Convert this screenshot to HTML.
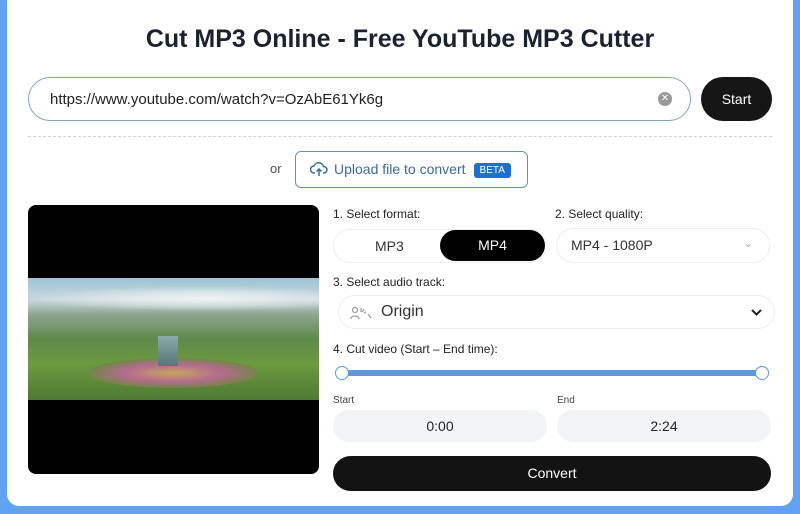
<!DOCTYPE html>
<html><head><style>
*{box-sizing:border-box;margin:0;padding:0}
body{width:800px;height:514px;background:#62a2f2;font-family:"Liberation Sans",sans-serif;position:relative;overflow:hidden}
.card{position:absolute;left:7px;top:-10px;width:786px;height:516px;background:#fff;border-radius:12px}
.a{position:absolute}
h1{position:absolute;left:0;width:800px;top:25px;text-align:center;font-size:25px;font-weight:bold;color:#1a2230;letter-spacing:0}
.input{left:28px;top:77px;width:663px;height:44px;border:1.5px solid #7ea3cc;border-radius:22px;font-size:15px;color:#222;padding:13px 0 0 21px}
.x{left:658px;top:92px;width:14px;height:14px;border-radius:50%;background:#999;color:#fff;font-size:10px;text-align:center;line-height:14px}
.start{left:701px;top:77px;width:71px;height:44px;border-radius:22px;background:#161616;color:#fff;font-size:14px;text-align:center;line-height:44px}
.dash{left:28px;top:136px;width:744px;border-top:1px dashed #d4d4d4}
.up{left:295px;top:151px;width:233px;height:37px;border:1.5px solid #6b8fb5;border-radius:6px;font-size:14px;color:#3c6a9a;padding:9px 0 0 38px}
.beta{display:inline-block;background:#1d6fd0;color:#fff;font-size:10px;padding:2px 6px;border-radius:3px;margin-left:8px;vertical-align:1px}
.lbl{font-size:12px;color:#222}
.pill{border:1px solid #eee;border-radius:20px;font-size:14px;color:#333}
.vid{left:28px;top:205px;width:291px;height:269px;background:#000;border-radius:8px;overflow:hidden}
.band{position:absolute;left:0;top:73px;width:291px;height:122px;background:linear-gradient(180deg,#9fc3d6 0%,#c7d8dd 18%,#8ea592 30%,#5d8a4a 50%,#6c9a40 70%,#4f7a33 100%)}
</style></head><body>
<div class="card"></div>
<h1>Cut MP3 Online - Free YouTube MP3 Cutter</h1>
<div class="a input">https://www.youtube.com/watch?v=OzAbE61Yk6g</div>
<div class="a x">✕</div>
<div class="a start">Start</div>
<div class="a dash"></div>
<div class="a" style="left:270px;top:161px;font-size:13px;color:#555">or</div>
<div class="a up"><svg class="a" style="left:14px;top:9px" width="18" height="16" viewBox="0 0 18 16" fill="none" stroke="#3c6a9a" stroke-width="1.5"><path d="M5 12H4a3.5 3.5 0 0 1 0-7 5 5 0 0 1 9.5 0.5A3 3 0 0 1 14 12h-1"/><path d="M9 15V8M6.5 10.5L9 8l2.5 2.5"/></svg>Upload file to convert<span class="beta">BETA</span></div>
<div class="a vid"><div class="band">
<div style="position:absolute;left:0;top:8px;width:291px;height:25px;background:radial-gradient(ellipse at 60% 50%,#eef2f2 0%,rgba(230,235,235,.6) 40%,transparent 70%)"></div>
<div style="position:absolute;left:60px;top:80px;width:170px;height:30px;border-radius:50%;background:radial-gradient(ellipse,#c9a35e 0%,#b46b8e 40%,#6a8a3e 75%,transparent 80%)"></div>
<div style="position:absolute;left:130px;top:58px;width:20px;height:30px;background:linear-gradient(#8aa,#577)"></div>
</div></div>
<div class="a lbl" style="left:333px;top:207px">1. Select format:</div>
<div class="a lbl" style="left:555px;top:207px">2. Select quality:</div>
<div class="a pill" style="left:333px;top:229px;width:214px;height:34px"></div>
<div class="a" style="left:375px;top:238px;font-size:14px;color:#333">MP3</div>
<div class="a" style="left:440px;top:230px;width:105px;height:31px;background:#000;border-radius:16px;color:#fff;font-size:14px;text-align:center;line-height:31px">MP4</div>
<div class="a pill" style="left:556px;top:228px;width:214px;height:35px;padding:8px 0 0 14px">MP4 - 1080P<span style="position:absolute;right:16px;top:8px;color:#aaa;font-size:11px">⌄</span></div>
<div class="a lbl" style="left:333px;top:275px">3. Select audio track:</div>
<div class="a pill" style="left:338px;top:295px;width:437px;height:34px;font-size:16px;padding:7px 0 0 42px">Origin
<svg class="a" style="left:11px;top:10px" width="22" height="14" viewBox="0 0 22 14" fill="none" stroke="#999" stroke-width="1.2"><circle cx="5" cy="4" r="2.5"/><path d="M1 13c0-4 8-4 8 0"/><path d="M11 2v4M14 3l-2 3M16 6l-2 1M18 8l3 4"/></svg>
<svg class="a" style="right:12px;top:13px" width="11" height="8" viewBox="0 0 11 8" fill="none" stroke="#222" stroke-width="2"><path d="M1 1l4.5 4.5L10 1"/></svg></div>
<div class="a lbl" style="left:333px;top:342px">4. Cut video (Start – End time):</div>
<div class="a" style="left:342px;top:370px;width:420px;height:6px;background:#5c9ae0"></div>
<div class="a" style="left:335px;top:366px;width:14px;height:14px;border:1.5px solid #5c9ae0;background:#fff;border-radius:50%"></div>
<div class="a" style="left:755px;top:366px;width:14px;height:14px;border:1.5px solid #5c9ae0;background:#fff;border-radius:50%"></div>
<div class="a" style="left:333px;top:395px;font-size:10px;color:#444">Start</div>
<div class="a" style="left:557px;top:395px;font-size:10px;color:#444">End</div>
<div class="a" style="left:333px;top:410px;width:214px;height:32px;background:#f2f4f7;border-radius:16px;text-align:center;line-height:32px;font-size:14px;color:#222">0:00</div>
<div class="a" style="left:557px;top:410px;width:214px;height:32px;background:#f2f4f7;border-radius:16px;text-align:center;line-height:32px;font-size:14px;color:#222">2:24</div>
<div class="a" style="left:333px;top:456px;width:438px;height:35px;background:#131313;border-radius:18px;text-align:center;line-height:35px;font-size:14px;color:#fff">Convert</div>
</body></html>
